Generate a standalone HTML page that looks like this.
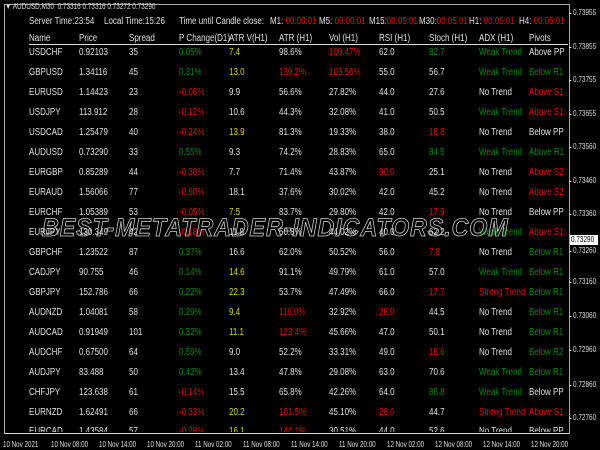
<!DOCTYPE html>
<html><head><meta charset="utf-8"><style>
body{margin:0;width:600px;height:450px;background:#000;overflow:hidden;font-family:"Liberation Sans",sans-serif;font-size:10px;color:#e0e0e0;position:relative}
.a{position:absolute;white-space:nowrap}
.t{transform:scaleX(.8);transform-origin:left}
.r{position:absolute;left:0;width:568px;height:14px}
.r span{position:absolute;top:0;white-space:nowrap;transform:scaleX(.8);transform-origin:left}
.c1{left:29px}.c2{left:79px}.c3{left:129px}.c4{left:179px}.c5{left:229px}.c6{left:279px}.c7{left:329px}.c8{left:379px}.c9{left:429px}.c10{left:479px}.c11{left:529px}
.g{color:#0a8a0a}.y{color:#d8d800}.d{color:#e00000}
.ax{position:absolute;left:573px;font-size:8px;color:#ddd;transform:scaleX(.8);transform-origin:left}
.ax:before{content:"";position:absolute;left:-5px;top:5px;width:3px;height:1px;background:#ddd}
.bx{position:absolute;top:440px;font-size:8px;color:#ddd;transform:scaleX(.78);transform-origin:left;white-space:nowrap}
</style></head><body>
<div class="a" style="left:4px;top:4px;width:564px;height:428px;border:1px solid #aaa;border-bottom:1px solid #ddd"></div>
<div class="a t" style="left:5px;top:2px;font-size:8px;color:#ddd">▼ AUDUSD,M30&nbsp; 0.73316 0.73316 0.73272 0.73290</div>
<div class="a t" style="left:29px;top:16px">Server Time:23:54</div>
<div class="a t" style="left:104px;top:16px">Local Time:15:26</div>
<div class="a t" style="left:179px;top:16px">Time until Candle close:</div>
<div class="a t" style="left:270px;top:16px">M1: <span class="d">00:00:01</span></div>
<div class="a t" style="left:319px;top:16px">M5: <span class="d">00:00:01</span></div>
<div class="a t" style="left:369px;top:16px">M15:<span class="d">00:05:01</span></div>
<div class="a t" style="left:419px;top:16px">M30:<span class="d">00:05:01</span></div>
<div class="a t" style="left:469px;top:16px">H1: <span class="d">00:05:01</span></div>
<div class="a t" style="left:519px;top:16px">H4: <span class="d">00:05:01</span></div>
<div class="a" style="left:29px;top:44px;width:539px;height:1px;background:#ddd"></div>
<div class="r" style="top:33px"><span class="c1">Name</span><span class="c2">Price</span><span class="c3">Spread</span><span class="c4">P Change(D1)</span><span class="c5">ATR V(H1)</span><span class="c6">ATR (H1)</span><span class="c7">Vol (H1)</span><span class="c8">RSI (H1)</span><span class="c9">Stoch (H1)</span><span class="c10">ADX (H1)</span><span class="c11">Pivots</span></div>
<div class="r" style="top:47px"><span class="c1">USDCHF</span><span class="c2">0.92103</span><span class="c3">35</span><span class="c4 g">0.05%</span><span class="c5 y">7.4</span><span class="c6">98.6%</span><span class="c7 d">109.47%</span><span class="c8">62.0</span><span class="c9 g">82.7</span><span class="c10 g">Weak Trend</span><span class="c11">Above PP</span></div>
<div class="r" style="top:67px"><span class="c1">GBPUSD</span><span class="c2">1.34116</span><span class="c3">45</span><span class="c4 g">0.31%</span><span class="c5 y">13.0</span><span class="c6 d">139.2%</span><span class="c7 d">103.56%</span><span class="c8">55.0</span><span class="c9">56.7</span><span class="c10 g">Weak Trend</span><span class="c11 g">Below R1</span></div>
<div class="r" style="top:87px"><span class="c1">EURUSD</span><span class="c2">1.14423</span><span class="c3">23</span><span class="c4 d">-0.06%</span><span class="c5">9.9</span><span class="c6">56.6%</span><span class="c7">27.82%</span><span class="c8">44.0</span><span class="c9">27.6</span><span class="c10">No Trend</span><span class="c11 d">Above S1</span></div>
<div class="r" style="top:107px"><span class="c1">USDJPY</span><span class="c2">113.912</span><span class="c3">28</span><span class="c4 d">-0.12%</span><span class="c5">10.6</span><span class="c6">44.3%</span><span class="c7">32.08%</span><span class="c8">41.0</span><span class="c9">50.5</span><span class="c10 g">Weak Trend</span><span class="c11 d">Above S1</span></div>
<div class="r" style="top:127px"><span class="c1">USDCAD</span><span class="c2">1.25479</span><span class="c3">40</span><span class="c4 d">-0.24%</span><span class="c5 y">13.9</span><span class="c6">81.3%</span><span class="c7">19.33%</span><span class="c8">38.0</span><span class="c9 d">18.8</span><span class="c10">No Trend</span><span class="c11">Below PP</span></div>
<div class="r" style="top:147px"><span class="c1">AUDUSD</span><span class="c2">0.73290</span><span class="c3">33</span><span class="c4 g">0.55%</span><span class="c5">9.3</span><span class="c6">74.2%</span><span class="c7">28.83%</span><span class="c8">65.0</span><span class="c9 g">84.5</span><span class="c10 g">Weak Trend</span><span class="c11 g">Above R1</span></div>
<div class="r" style="top:167px"><span class="c1">EURGBP</span><span class="c2">0.85289</span><span class="c3">44</span><span class="c4 d">-0.38%</span><span class="c5">7.7</span><span class="c6">71.4%</span><span class="c7">43.87%</span><span class="c8 d">30.0</span><span class="c9">25.1</span><span class="c10">No Trend</span><span class="c11 d">Above S2</span></div>
<div class="r" style="top:187px"><span class="c1">EURAUD</span><span class="c2">1.56066</span><span class="c3">77</span><span class="c4 d">-0.60%</span><span class="c5">18.1</span><span class="c6">37.6%</span><span class="c7">30.02%</span><span class="c8">42.0</span><span class="c9">45.2</span><span class="c10">No Trend</span><span class="c11 d">Above S2</span></div>
<div class="r" style="top:207px"><span class="c1">EURCHF</span><span class="c2">1.05389</span><span class="c3">53</span><span class="c4 d">-0.05%</span><span class="c5 y">7.5</span><span class="c6">83.7%</span><span class="c7">29.80%</span><span class="c8">42.0</span><span class="c9 d">17.9</span><span class="c10">No Trend</span><span class="c11">Below PP</span></div>
<div class="r" style="top:227px"><span class="c1">EURJPY</span><span class="c2">130.349</span><span class="c3">42</span><span class="c4 d">-0.18%</span><span class="c5">11.8</span><span class="c6">50.8%</span><span class="c7">44.02%</span><span class="c8">40.0</span><span class="c9">62.2</span><span class="c10 g">Weak Trend</span><span class="c11 d">Above S1</span></div>
<div class="r" style="top:247px"><span class="c1">GBPCHF</span><span class="c2">1.23522</span><span class="c3">87</span><span class="c4 g">0.37%</span><span class="c5">16.6</span><span class="c6">62.0%</span><span class="c7">50.52%</span><span class="c8">56.0</span><span class="c9 d">7.8</span><span class="c10">No Trend</span><span class="c11 g">Below R1</span></div>
<div class="r" style="top:267px"><span class="c1">CADJPY</span><span class="c2">90.755</span><span class="c3">46</span><span class="c4 g">0.14%</span><span class="c5 y">14.6</span><span class="c6">91.1%</span><span class="c7">49.79%</span><span class="c8">61.0</span><span class="c9">57.0</span><span class="c10 g">Weak Trend</span><span class="c11 g">Below R1</span></div>
<div class="r" style="top:287px"><span class="c1">GBPJPY</span><span class="c2">152.786</span><span class="c3">66</span><span class="c4 g">0.22%</span><span class="c5 y">22.3</span><span class="c6">53.7%</span><span class="c7">47.49%</span><span class="c8">66.0</span><span class="c9 d">17.7</span><span class="c10 d">Strong Trend</span><span class="c11 g">Below R1</span></div>
<div class="r" style="top:307px"><span class="c1">AUDNZD</span><span class="c2">1.04081</span><span class="c3">58</span><span class="c4 g">0.29%</span><span class="c5 y">9.4</span><span class="c6 d">116.0%</span><span class="c7">32.92%</span><span class="c8 d">28.0</span><span class="c9">44.5</span><span class="c10">No Trend</span><span class="c11 g">Below R1</span></div>
<div class="r" style="top:327px"><span class="c1">AUDCAD</span><span class="c2">0.91949</span><span class="c3">101</span><span class="c4 g">0.32%</span><span class="c5 y">11.1</span><span class="c6 d">123.4%</span><span class="c7">45.66%</span><span class="c8">47.0</span><span class="c9">50.1</span><span class="c10">No Trend</span><span class="c11 g">Below R1</span></div>
<div class="r" style="top:347px"><span class="c1">AUDCHF</span><span class="c2">0.67500</span><span class="c3">64</span><span class="c4 g">0.59%</span><span class="c5">9.0</span><span class="c6">52.2%</span><span class="c7">33.31%</span><span class="c8">49.0</span><span class="c9 d">18.6</span><span class="c10">No Trend</span><span class="c11 g">Below R2</span></div>
<div class="r" style="top:367px"><span class="c1">AUDJPY</span><span class="c2">83.488</span><span class="c3">50</span><span class="c4 g">0.42%</span><span class="c5">13.4</span><span class="c6">47.8%</span><span class="c7">29.08%</span><span class="c8">63.0</span><span class="c9">70.6</span><span class="c10 g">Weak Trend</span><span class="c11 g">Below R1</span></div>
<div class="r" style="top:387px"><span class="c1">CHFJPY</span><span class="c2">123.638</span><span class="c3">61</span><span class="c4 d">-0.14%</span><span class="c5">15.5</span><span class="c6">65.8%</span><span class="c7">42.26%</span><span class="c8">64.0</span><span class="c9 g">86.8</span><span class="c10 g">Weak Trend</span><span class="c11">Below PP</span></div>
<div class="r" style="top:407px"><span class="c1">EURNZD</span><span class="c2">1.62491</span><span class="c3">66</span><span class="c4 d">-0.33%</span><span class="c5 y">20.2</span><span class="c6 d">101.5%</span><span class="c7">45.10%</span><span class="c8 d">28.0</span><span class="c9">44.7</span><span class="c10 d">Strong Trend</span><span class="c11 d">Above S1</span></div>
<div class="a" style="left:0;top:426px;width:568px;height:6px;overflow:hidden"><div class="r" style="top:0"><span class="c1">EURCAD</span><span class="c2">1.43584</span><span class="c3">57</span><span class="c4 d">-0.28%</span><span class="c5 y">16.1</span><span class="c6 d">144.1%</span><span class="c7">30.51%</span><span class="c8">44.0</span><span class="c9">52.6</span><span class="c10">No Trend</span><span class="c11">Below PP</span></div></div>
<div class="a" style="left:42px;top:214px;font-size:25px;font-style:italic;font-weight:bold;color:transparent;-webkit-text-stroke:0.8px #d0d0d0;letter-spacing:1px;transform:scaleX(.93);transform-origin:left">BEST-METATRADER-INDICATORS.COM</div>
<div class="ax" style="top:8px">0.73955</div>
<div class="ax" style="top:42px">0.73855</div>
<div class="ax" style="top:75px">0.73755</div>
<div class="ax" style="top:109px">0.73655</div>
<div class="ax" style="top:142px">0.73560</div>
<div class="ax" style="top:176px">0.73460</div>
<div class="ax" style="top:209px">0.73360</div>
<div class="ax" style="top:246px">0.73260</div>
<div class="ax" style="top:277px">0.73160</div>
<div class="ax" style="top:311px">0.73060</div>
<div class="ax" style="top:345px">0.72960</div>
<div class="ax" style="top:380px">0.72860</div>
<div class="ax" style="top:413px">0.72760</div>
<div class="a" style="left:570px;top:235px;font-size:8px;background:#fff;color:#000;padding:0 1px;line-height:10px;width:26px;overflow:hidden"><span style="display:inline-block;transform:scaleX(.8);transform-origin:left">0.73290</span></div>
<div class="bx" style="left:3px">10 Nov 2021</div>
<div class="bx" style="left:51px">10 Nov 08:00</div>
<div class="bx" style="left:99px">10 Nov 14:00</div>
<div class="bx" style="left:147px">10 Nov 20:00</div>
<div class="bx" style="left:195px">11 Nov 02:00</div>
<div class="bx" style="left:243px">11 Nov 08:00</div>
<div class="bx" style="left:291px">11 Nov 14:00</div>
<div class="bx" style="left:339px">11 Nov 20:00</div>
<div class="bx" style="left:387px">12 Nov 02:00</div>
<div class="bx" style="left:435px">12 Nov 08:00</div>
<div class="bx" style="left:483px">12 Nov 14:00</div>
<div class="bx" style="left:531px">12 Nov 20:00</div>
</body></html>
